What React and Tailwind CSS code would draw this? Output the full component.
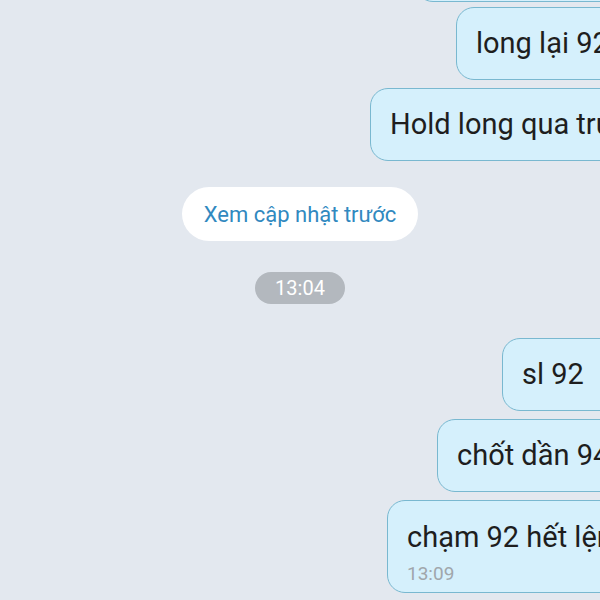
import React from "react";

const Bubble = ({ width, children, time }) => (
  <div
    className={`${width} shrink-0 rounded-[18px] border-[1.5px] border-[#79b8d0] bg-[#d5f0fc] px-[19px] text-[#1e1e1e] ${
      time ? "pt-[18px] pb-[6px]" : "flex h-[73px] items-center"
    }`}
  >
    <div className="overflow-hidden whitespace-nowrap text-[29px] leading-[37px]">{children}</div>
    {time && <div className="mt-[6px] text-[19px] leading-[24px] text-[#a0a6ab]">{time}</div>}
  </div>
);

export default function App() {
  return (
    <div
      className="h-[600px] w-[600px] overflow-hidden bg-[#e3e8ef]"
      style={{ fontFamily: "Roboto, 'Noto Sans', sans-serif" }}
    >
      <div className="mr-[-40px] mt-[-71px] flex flex-col items-end">
        <Bubble width="w-[225px]">Thanks</Bubble>
        <div className="h-[5px]" />
        <Bubble width="w-[184px]">long lại 92</Bubble>
        <div className="h-[8px]" />
        <Bubble width="w-[270px]">Hold long qua trưa</Bubble>
      </div>

      <div className="mt-[26px] flex flex-col items-center">
        <div className="flex h-[54px] w-[236px] items-center justify-center rounded-full bg-white text-[22px] text-[#3189bf]">
          Xem cập nhật trước
        </div>
        <div className="mt-[31px] flex h-[32px] w-[90px] items-center justify-center rounded-full bg-[#b3b8be] text-[20px] text-white">
          13:04
        </div>
      </div>

      <div className="mr-[-40px] mt-[34px] flex flex-col items-end gap-[8px]">
        <Bubble width="w-[138px]">sl 92</Bubble>
        <Bubble width="w-[203px]">chốt dần 94</Bubble>
        <Bubble width="w-[253px]" time="13:09">
          chạm 92 hết lệnh
        </Bubble>
      </div>
    </div>
  );
}
